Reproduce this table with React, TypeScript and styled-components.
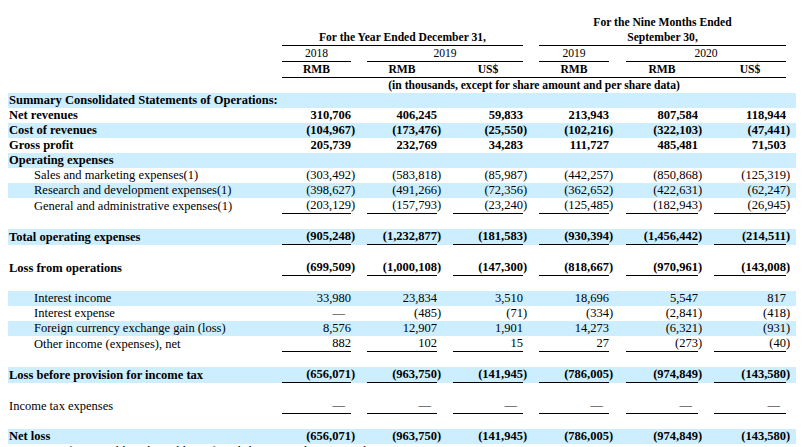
import React from "react";
import styled, { createGlobalStyle } from "styled-components";

const Global = createGlobalStyle`
  html, body {
    margin: 0;
    padding: 0;
    background: #ffffff;
    overflow: hidden;
  }
`;

const Page = styled.div`
  padding: 15px 0 0 8px;
  width: 803px;
  height: 447px;
  box-sizing: border-box;
  overflow: hidden;
`;

const Sheet = styled.table`
  width: 788px;
  table-layout: fixed;
  border-collapse: separate;
  border-spacing: 0;
  font-family: "Liberation Serif", "Times New Roman", serif;
  color: #000;
`;

const HeadRow = styled.tr``;

const HeadCell = styled.td<{ $rule?: boolean; $regular?: boolean }>`
  padding: 0;
  font-size: 11.6px;
  line-height: 15px;
  font-weight: ${(p) => (p.$regular ? 400 : 700)};
  text-align: center;
  white-space: nowrap;
  border-bottom: ${(p) => (p.$rule ? "1px solid #000" : "0")};
`;

const BodyRow = styled.tr<{ $shade?: boolean }>`
  height: 15px;
  background: ${(p) => (p.$shade ? "#cceeff" : "transparent")};
`;

const LabelCell = styled.td<{ $bold?: boolean; $indent?: boolean }>`
  padding: 0 0 0 ${(p) => (p.$indent ? "26px" : "1px")};
  font-size: 12.5px;
  line-height: 15px;
  font-weight: ${(p) => (p.$bold ? 700 : 400)};
  white-space: nowrap;
  overflow: visible;
`;

const NumCell = styled.td<{ $bold?: boolean; $rule?: boolean }>`
  padding: 0;
  font-size: 12.5px;
  line-height: 15px;
  font-weight: ${(p) => (p.$bold ? 700 : 400)};
  text-align: right;
  white-space: nowrap;
  border-bottom: ${(p) => (p.$rule ? "1px solid #000" : "0")};
`;

const GapCell = styled.td<{ $rule?: boolean }>`
  padding: 0;
  border-bottom: ${(p) => (p.$rule ? "1px solid #000" : "0")};
`;

const Hang = styled.span`
  display: inline-block;
  width: 0;
  overflow: visible;
`;

const Dash = styled.span`
  display: inline-block;
  margin-right: 6px;
`;

type Kind = "bold" | "indent" | "plain" | "blank";

interface Line {
  label?: string;
  kind: Kind;
  shade?: boolean;
  rule?: boolean;
  values?: string[];
}

const COLS = [274, 69, 16, 70, 16, 70, 16, 70, 17, 72, 16, 72, 10];

const LINES: Line[] = [
  { label: "Summary Consolidated Statements of Operations:", kind: "bold", shade: true },
  { label: "Net revenues", kind: "bold", values: ["310,706", "406,245", "59,833", "213,943", "807,584", "118,944"] },
  { label: "Cost of revenues", kind: "bold", shade: true, values: ["(104,967)", "(173,476)", "(25,550)", "(102,216)", "(322,103)", "(47,441)"] },
  { label: "Gross profit", kind: "bold", values: ["205,739", "232,769", "34,283", "111,727", "485,481", "71,503"] },
  { label: "Operating expenses", kind: "bold", shade: true },
  { label: "Sales and marketing expenses(1)", kind: "indent", values: ["(303,492)", "(583,818)", "(85,987)", "(442,257)", "(850,868)", "(125,319)"] },
  { label: "Research and development expenses(1)", kind: "indent", shade: true, values: ["(398,627)", "(491,266)", "(72,356)", "(362,652)", "(422,631)", "(62,247)"] },
  { label: "General and administrative expenses(1)", kind: "indent", rule: true, values: ["(203,129)", "(157,793)", "(23,240)", "(125,485)", "(182,943)", "(26,945)"] },
  { kind: "blank" },
  { label: "Total operating expenses", kind: "bold", shade: true, rule: true, values: ["(905,248)", "(1,232,877)", "(181,583)", "(930,394)", "(1,456,442)", "(214,511)"] },
  { kind: "blank" },
  { label: "Loss from operations", kind: "bold", rule: true, values: ["(699,509)", "(1,000,108)", "(147,300)", "(818,667)", "(970,961)", "(143,008)"] },
  { kind: "blank" },
  { label: "Interest income", kind: "indent", shade: true, values: ["33,980", "23,834", "3,510", "18,696", "5,547", "817"] },
  { label: "Interest expense", kind: "indent", values: ["—", "(485)", "(71)", "(334)", "(2,841)", "(418)"] },
  { label: "Foreign currency exchange gain (loss)", kind: "indent", shade: true, values: ["8,576", "12,907", "1,901", "14,273", "(6,321)", "(931)"] },
  { label: "Other income (expenses), net", kind: "indent", rule: true, values: ["882", "102", "15", "27", "(273)", "(40)"] },
  { kind: "blank" },
  { label: "Loss before provision for income tax", kind: "bold", shade: true, rule: true, values: ["(656,071)", "(963,750)", "(141,945)", "(786,005)", "(974,849)", "(143,580)"] },
  { kind: "blank" },
  { label: "Income tax expenses", kind: "plain", rule: true, values: ["—", "—", "—", "—", "—", "—"] },
  { kind: "blank" },
  { label: "Net loss", kind: "bold", shade: true, values: ["(656,071)", "(963,750)", "(141,945)", "(786,005)", "(974,849)", "(143,580)"] },
  { label: "Accretion of convertible redeemable preferred shares to redemption value", kind: "plain" },
];

function Amount({ v }: { v: string }) {
  if (v === "—") return <Dash>—</Dash>;
  if (v.startsWith("(")) {
    return (
      <>
        {v.slice(0, -1)}
        <Hang>)</Hang>
      </>
    );
  }
  return <>{v}</>;
}

function DataRow({ line }: { line: Line }) {
  if (line.kind === "blank") {
    return (
      <BodyRow>
        <td colSpan={13} />
      </BodyRow>
    );
  }
  const bold = line.kind === "bold";
  const vals = line.values;
  const cells: React.ReactNode[] = [];
  for (let i = 0; i < 6; i++) {
    cells.push(
      <NumCell key={`n${i}`} $bold={bold} $rule={!!vals && line.rule}>
        {vals ? <Amount v={vals[i]} /> : null}
      </NumCell>
    );
    if (i < 5) cells.push(<GapCell key={`g${i}`} />);
  }
  return (
    <BodyRow $shade={line.shade}>
      <LabelCell $bold={bold} $indent={line.kind === "indent"}>
        {line.label}
      </LabelCell>
      {cells}
      <GapCell />
    </BodyRow>
  );
}

export default function App() {
  return (
    <Page>
      <Global />
      <Sheet>
        <colgroup>
          {COLS.map((w, i) => (
            <col key={i} style={{ width: w }} />
          ))}
        </colgroup>
        <thead>
          <HeadRow>
            <HeadCell />
            <HeadCell colSpan={5} />
            <HeadCell />
            <HeadCell colSpan={5}>For the Nine Months Ended</HeadCell>
            <HeadCell />
          </HeadRow>
          <HeadRow>
            <HeadCell />
            <HeadCell colSpan={5} $rule>
              For the Year Ended December 31,
            </HeadCell>
            <HeadCell />
            <HeadCell colSpan={5} $rule>
              September 30,
            </HeadCell>
            <HeadCell />
          </HeadRow>
          <HeadRow>
            <HeadCell />
            <HeadCell $rule $regular>2018</HeadCell>
            <HeadCell />
            <HeadCell colSpan={3} $rule $regular>2019</HeadCell>
            <HeadCell />
            <HeadCell $rule $regular>2019</HeadCell>
            <HeadCell />
            <HeadCell colSpan={3} $rule $regular>2020</HeadCell>
            <HeadCell />
          </HeadRow>
          <HeadRow>
            <HeadCell />
            <HeadCell $rule>RMB</HeadCell>
            <HeadCell $rule />
            <HeadCell $rule>RMB</HeadCell>
            <HeadCell $rule />
            <HeadCell $rule>US$</HeadCell>
            <HeadCell $rule />
            <HeadCell $rule>RMB</HeadCell>
            <HeadCell $rule />
            <HeadCell $rule>RMB</HeadCell>
            <HeadCell $rule />
            <HeadCell $rule>US$</HeadCell>
            <HeadCell />
          </HeadRow>
          <HeadRow>
            <HeadCell />
            <HeadCell colSpan={11}>
              (in thousands, except for share amount and per share data)
            </HeadCell>
            <HeadCell />
          </HeadRow>
        </thead>
        <tbody>
          {LINES.map((line, i) => (
            <DataRow key={i} line={line} />
          ))}
        </tbody>
      </Sheet>
    </Page>
  );
}
